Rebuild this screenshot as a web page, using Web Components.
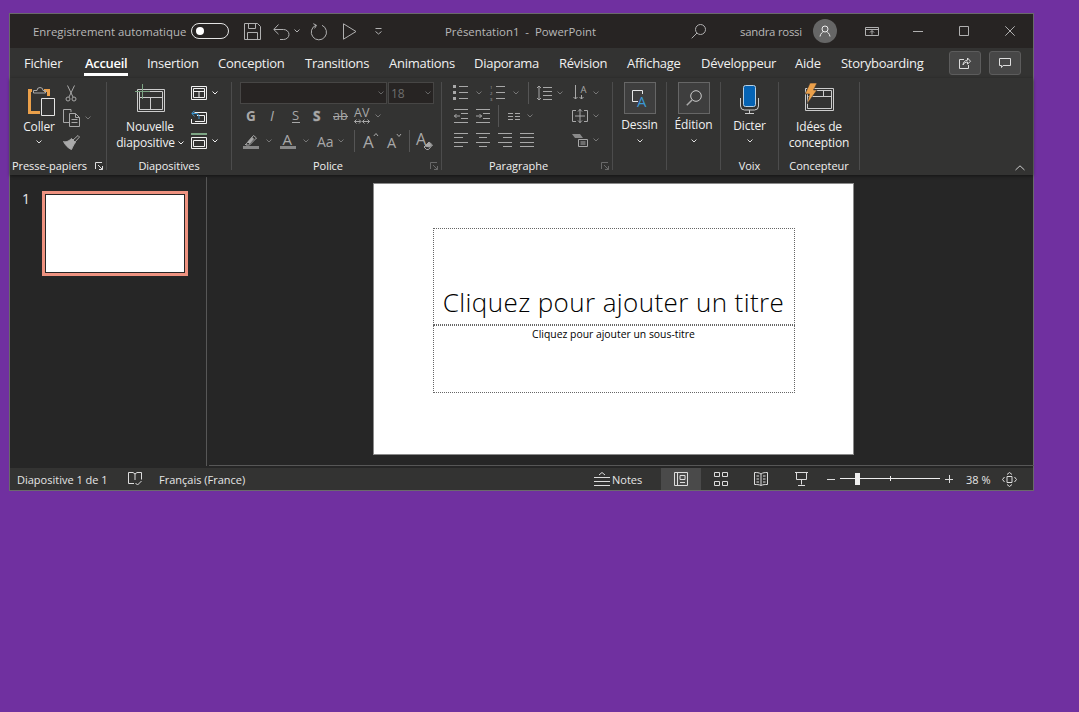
<!DOCTYPE html>
<html lang="fr">
<head>
<title>Présentation1 - PowerPoint</title>
<meta charset="utf-8">
<style>
    html, body { margin: 0; height: 100%; background: #7030a0; overflow: hidden; }
    body { font: 12px "Open Sans", "Noto Sans", sans-serif; color: #f0f0f0; }
    .dim { color: #a8a8a8; }
</style>
</head>
<body>
<pp-window>
    <pp-titlebar></pp-titlebar>
    <pp-tabs>
        <pp-tab style="width:61px">Fichier</pp-tab>
        <pp-tab active style="width:62px">Accueil</pp-tab>
        <pp-tab style="width:71px">Insertion</pp-tab>
        <pp-tab style="width:87px">Conception</pp-tab>
        <pp-tab style="width:84px">Transitions</pp-tab>
        <pp-tab style="width:85px">Animations</pp-tab>
        <pp-tab style="width:85px">Diaporama</pp-tab>
        <pp-tab style="width:68px">Révision</pp-tab>
        <pp-tab style="width:74px">Affichage</pp-tab>
        <pp-tab style="width:94px">Développeur</pp-tab>
        <pp-tab style="width:46px">Aide</pp-tab>
        <pp-tab style="width:108px">Storyboarding</pp-tab>
    </pp-tabs>
    <pp-ribbon>
        <pp-group label="Presse-papiers" w="97" launcher="on">
            <pp-row style="height:auto;align-items:flex-start">
                <pp-big style="width:48px;margin-left:5px;--top:4px;--gap:2px" chev>
                    <pp-icon n="paste" slot="icon" style="margin-left:5px"></pp-icon>Coller
                </pp-big>
                <pp-col>
                    <pp-icon n="scissors" class="dim" style="margin:3px 0 0 3px"></pp-icon>
                    <pp-row style="height:18px;margin-top:7px"><pp-icon n="copy" class="dim"></pp-icon><pp-icon n="chev" style="margin-left:5px;color:#777"></pp-icon></pp-row>
                    <pp-icon n="brush" class="dim" style="margin-top:8px"></pp-icon>
                </pp-col>
            </pp-row>
        </pp-group>
        <pp-group label="Diapositives" w="125">
            <pp-row style="height:auto;align-items:flex-start">
                <pp-big style="width:76px;margin-left:5px;--top:2px;--gap:8px">
                    <pp-icon n="newslide" slot="icon"></pp-icon>Nouvelle<br>diapositive <pp-icon n="chev" style="display:inline-block;vertical-align:2px"></pp-icon>
                </pp-big>
                <pp-col style="margin-left:3px">
                    <pp-row style="height:13px;margin-top:4px"><pp-icon n="layout"></pp-icon><pp-icon n="chev" style="margin-left:5px"></pp-icon></pp-row>
                    <pp-row style="height:14px;margin-top:11px"><pp-icon n="reset"></pp-icon></pp-row>
                    <pp-row style="height:16px;margin-top:9px"><pp-icon n="section"></pp-icon><pp-icon n="chev" style="margin-left:5px"></pp-icon></pp-row>
                </pp-col>
            </pp-row>
        </pp-group>
        <pp-group label="Police" w="210" launcher="dim">
            <pp-row style="height:22px;margin-left:8px">
                <pp-combo style="width:147px"></pp-combo>
                <pp-combo style="width:46px;margin-left:1px">18</pp-combo>
            </pp-row>
            <pp-row class="dim" style="height:18px;margin-top:3px">
                <pp-icon n="bold" style="margin-left:14px"></pp-icon>
                <pp-icon n="italic" style="margin-left:14px"></pp-icon>
                <pp-icon n="under" style="margin-left:16px"></pp-icon>
                <pp-icon n="shadow" style="margin-left:13px"></pp-icon>
                <pp-icon n="strike" style="margin-left:10px"></pp-icon>
                <pp-icon n="spacing" style="margin-left:6px"></pp-icon>
                <pp-icon n="chev" style="margin-left:5px;color:#777"></pp-icon>
            </pp-row>
            <pp-row class="dim" style="height:19px;margin-top:6px">
                <pp-icon n="pen" style="margin-left:11px"></pp-icon>
                <pp-icon n="chev" style="margin-left:7px;color:#777"></pp-icon>
                <pp-icon n="color" style="margin-left:8px"></pp-icon>
                <pp-icon n="chev" style="margin-left:7px;color:#777"></pp-icon>
                <pp-icon n="case" style="margin-left:8px"></pp-icon>
                <pp-icon n="chev" style="margin-left:4px;color:#777"></pp-icon>
                <pp-icon n="sep" style="margin-left:10px"></pp-icon>
                <pp-icon n="grow" style="margin-left:8px"></pp-icon>
                <pp-icon n="shrink" style="margin-left:9px"></pp-icon>
                <pp-icon n="sep" style="margin-left:8px"></pp-icon>
                <pp-icon n="clear" style="margin-left:6px"></pp-icon>
            </pp-row>
        </pp-group>
        <pp-group label="Paragraphe" w="171" launcher="dim">
            <pp-row class="dim" style="height:15px;margin-top:3px">
                <pp-icon n="bullets" style="margin-left:11px"></pp-icon>
                <pp-icon n="chev" style="margin-left:8px;color:#777"></pp-icon>
                <pp-icon n="numbers" style="margin-left:8px"></pp-icon>
                <pp-icon n="chev" style="margin-left:8px;color:#777"></pp-icon>
                <pp-icon n="sep" style="margin-left:9px"></pp-icon>
                <pp-icon n="linespace" style="margin-left:7px"></pp-icon>
                <pp-icon n="chev" style="margin-left:5px;color:#777"></pp-icon>
                <pp-icon n="textdir" style="margin-left:10px"></pp-icon>
                <pp-icon n="chev" style="margin-left:5px;color:#777"></pp-icon>
            </pp-row>
            <pp-row class="dim" style="height:14px;margin-top:9px">
                <pp-icon n="outdent" style="margin-left:12px"></pp-icon>
                <pp-icon n="indent" style="margin-left:8px"></pp-icon>
                <pp-icon n="sep" style="margin-left:8px"></pp-icon>
                <pp-icon n="columns" style="margin-left:9px"></pp-icon>
                <pp-icon n="chev" style="margin-left:7px;color:#777"></pp-icon>
                <pp-icon n="alignbox" style="margin-left:39px"></pp-icon>
                <pp-icon n="chev" style="margin-left:5px;color:#777"></pp-icon>
            </pp-row>
            <pp-row class="dim" style="height:14px;margin-top:10px">
                <pp-icon n="left" style="margin-left:12px"></pp-icon>
                <pp-icon n="center" style="margin-left:8px"></pp-icon>
                <pp-icon n="right" style="margin-left:8px"></pp-icon>
                <pp-icon n="justify" style="margin-left:8px"></pp-icon>
                <pp-icon n="smartart" style="margin-left:38px"></pp-icon>
                <pp-icon n="chev" style="margin-left:5px;color:#777"></pp-icon>
            </pp-row>
        </pp-group>
        <pp-group w="54">
            <pp-big boxed chev style="--gap:3px;--chev:6px"><pp-icon n="draw" slot="icon"></pp-icon>Dessin</pp-big>
        </pp-group>
        <pp-group w="54">
            <pp-big boxed chev style="--gap:3px;--chev:6px"><pp-icon n="find" slot="icon"></pp-icon>Édition</pp-big>
        </pp-group>
        <pp-group label="Voix" w="58">
            <pp-big chev style="--top:3px;--gap:4px"><pp-icon n="mic" slot="icon"></pp-icon>Dicter</pp-big>
        </pp-group>
        <pp-group label="Concepteur" w="81">
            <pp-big style="--top:1px;--gap:8px"><pp-icon n="ideas" slot="icon"></pp-icon>Idées de<br>conception</pp-big>
        </pp-group>
        <pp-icon n="collapse" style="margin:auto 8px 5px auto;color:#ccc"></pp-icon>
    </pp-ribbon>
    <pp-main>
        <pp-thumbs></pp-thumbs>
        <pp-editor>
            <pp-slide></pp-slide>
        </pp-editor>
    </pp-main>
    <pp-status></pp-status>
</pp-window>

<script>
    // every icon: [width, height, svg content], drawn 1:1 in pixels
    const ICONS = {
        chev: [6, 4, '<path d="M.5.5 3 3 5.5.5"/>'],
        collapse: [10, 5, '<path d="M.5 5 5 .8 9.500 5"/>'],
        sep: [1, 22, '<path d="M.5 0v22" stroke="#555"/>'],
        save: [17, 17, '<path d="M.5.5h13l3 3v13H.5zM4.500.5v5h7v-5M3.500 16.500v-7h10v7"/>'],
        undo: [17, 17, '<path d="M1 6.500h9.500a5.500 5 0 0 1 0 10H7M5.500 1.500.8 6.500l4.700 4.700"/>'],
        redo: [17, 17, '<path d="M5 2.200a7.600 7.600 0 1 0 6 .1"/><path d="M2.300.7 5.500 2.300 3.600 5.400"/>'],
        play: [14, 17, '<path d="M.5.8 13 8.500.5 16.200z"/>'],
        qat: [7, 7, '<path d="M.5.5h6M.5 3.500 3.500 6 6.500 3.500"/>'],
        search: [15, 15, '<circle cx="9.500" cy="5.500" r="5"/><path d="M6 9 .7 14.300"/>'],
        display: [14, 9, '<path d="M.5.5h13v8H.5zM.5 2.500h13M7 7.500V3.800M5 5.500l2-2 2 2"/>'],
        min: [10, 1, '<path d="M0 .5h10"/>'],
        max: [10, 10, '<path d="M.5.5h9v9h-9z"/>'],
        close: [10, 10, '<path d="m.3.300 9.400 9.400M9.700.300.300 9.700"/>'],
        user: [12, 12, '<circle cx="6" cy="4" r="3"/><path d="M1 11.500c.5-3 2.500-4.500 3.500-4.800M11 11.500c-.5-3-2.500-4.500-3.500-4.800"/>'],
        share: [12, 12, '<path d="M5 2.500H.5v9h9V8M4 8c.3-3 2-4.700 4.500-4.800V1l3 3.200-3 3V5C6.500 5 5 6 4 8z"/>'],
        comment: [12, 10, '<path d="M.5.500h11v7H4L2.500 9.500v-2h-2z"/>'],
        launch: [8, 8, '<path d="M.5 7V.5H7M3 3l4.500 4.500M7.500 4v3.500H4"/>'],
        paste: [28, 31, '<path d="M4 4.500H1.500v22H12" stroke="#eba04a" stroke-width="3"/><path d="M16 4.500h4.500V10" stroke="#eba04a" stroke-width="3"/><path d="M5.500 7V4.500H9a3 3 0 0 1 6 0h2.500V7z" stroke="#aaa"/><path fill="#333" stroke="#e4e4e4" d="M13.500 12.500h13v17h-13z"/>'],
        scissors: [10, 17, '<circle cx="2" cy="14" r="2"/><circle cx="8" cy="14" r="2"/><path d="M3 12 8.500.5M7 12 1.500.5"/>'],
        copy: [17, 18, '<path d="M8 3V.5H.5v13H6"/><path d="M6.500 4.500h6l4 4v9h-10zM8.500 10.500h6M8.500 13.500h6M12.500 4.500v4h4"/>'],
        brush: [17, 15, '<path d="M.5 6.500c3 1 6-1 8-3l4 4c-2 2-3 5-4 7-3-1-6-4-8-8z" fill="#aaa"/><path d="m10 5 5-4.500 1.500 1.500-4.500 5"/>'],
        newslide: [30, 27, '<path d="M2.500 5.500h27v22h-27zM4.500 7.500h23v18h-23zM4.500 13.500h23M15.500 13.500v12"/><path d="M0 7.500h15M7.500 0v15" stroke="#7da584"/>'],
        layout: [16, 14, '<path d="M.5.500h15v13H.5zM2.500 2.500h11v9h-11zM2.500 5.500h11M8 5.500v6"/>'],
        reset: [16, 14, '<path d="M3.500 2.500h12v11H.5V9M6 5.500h7.500v6H4"/><path stroke="#3b97d3" d="M1 3.500h4a3 3 0 0 1 3 3V9M3.500.8.800 3.500l2.700 2.700"/>'],
        section: [16, 16, '<path d="M.5 4.500h15v11H.5zM2.500 7.500h11v6h-11z"/><path stroke="#7da584" stroke-width="2" d="M0 1h16"/>'],
        bold: [10, 18, '<text x="0" y="14" font-size="13.500" font-weight="700">G</text>'],
        italic: [6, 18, '<text x="0" y="14" font-size="14.500" font-style="italic">I</text>'],
        under: [8, 18, '<text x="0" y="13" font-size="13">S</text><path d="M0 15.500h8"/>'],
        shadow: [10, 18, '<path d="M0 0"/><text x="0" y="14" font-size="13.500" font-weight="700" style="paint-order:stroke;stroke:#666;stroke-width:1px">S</text>'],
        strike: [15, 18, '<text x="0" y="13" font-size="12.500">ab</text><path d="M0 9.500h15"/>'],
        spacing: [16, 18, '<text x="0" y="10" font-size="12.500">AV</text><path d="M.5 14.500h6M8.500 14.500h7M2.500 12.500l-2 2 2 2M5 12.500l2 2-2 2M10.500 12.500l-2 2 2 2M13.500 12.500l2 2-2 2"/>'],
        pen: [16, 16, '<rect y="13" width="16" height="3" fill="#888" stroke="none"/><path d="M3.500 10.500 10.500 2.500l3 2.500-7 7H3zM3.500 10.500 2 12"/><path fill="#aaa" d="M5 9l4-4.500 1.500 1.500-4 4.500z"/>'],
        color: [16, 17, '<rect y="14" width="16" height="3" fill="#888" stroke="none"/><text x="2.500" y="12.500" font-size="15">A</text>'],
        case: [17, 14, '<text x="0" y="13" font-size="14">Aa</text>'],
        grow: [15, 18, '<text x="0" y="16" font-size="17">A</text><path d="M10.800 4 13 1.500 15 4"/>'],
        shrink: [14, 18, '<text x="0" y="16" font-size="14.500">A</text><path d="M9.800 2 12 4.500 14 2"/>'],
        clear: [17, 18, '<text x="0" y="13" font-size="16">A</text><path d="m8 15 5-5 3.500 3-4 4.500h-2z" fill="#333"/><path d="m9 14 3.500-3.500 3 2.500-2 2z" fill="#aaa"/>'],
        bullets: [15, 15, '<path fill="currentColor" stroke="none" d="M0 0h3v3H0zM0 6h3v3H0zM0 12h3v3H0z"/><path d="M6 1.500h9M6 7.500h9M6 13.500h9"/>'],
        numbers: [15, 15, '<text x="0" y="4" font-size="4.300">1</text><text x="0" y="10" font-size="4.300">2</text><text x="0" y="16" font-size="4.300">3</text><path d="M6 1.500h9M6 7.500h9M6 13.500h9"/>'],
        linespace: [16, 16, '<path d="M7 2.500h9M7 6.500h9M7 10.500h9M7 14.500h9M3 1v14M1 3l2-2 2 2M1 13l2 2 2-2"/>'],
        textdir: [15, 17, '<text x="7.500" y="9" font-size="9.500">A</text><path d="M2.500 1v14M.5 13l2 2 2-2M8.500 11v4M6.500 13l2 2 2-2"/>'],
        outdent: [14, 14, '<path d="M0 .5h14M7 4.500h7M7 9.500h7M0 13.500h14M0 7h6M2.500 5 .5 7l2 2"/>'],
        indent: [14, 14, '<path d="M0 .5h14M7 4.500h7M7 9.500h7M0 13.500h14M0 7h6M3.500 5l2 2-2 2"/>'],
        columns: [12, 7, '<path d="M0 .5h5M0 3.500h5M0 6.500h5M7 .5h5M7 3.500h5M7 6.500h5"/>'],
        alignbox: [16, 14, '<path d="M4 1.500H.5v11H4M12 1.500h3.500v11H12M8 0v14M6 2.500 8 .5l2 2M6 11.500l2 2 2-2M3 7h10"/>'],
        left: [14, 14, '<path d="M0 .5h14M0 4.500h9M0 9.500h14M0 13.500h9"/>'],
        center: [14, 14, '<path d="M0 .5h14M3 4.500h8M0 9.500h14M3 13.500h8"/>'],
        right: [14, 14, '<path d="M0 .5h14M5 4.500h9M0 9.500h14M5 13.500h9"/>'],
        justify: [14, 14, '<path d="M0 .5h14M0 4.500h14M0 9.500h14M0 13.500h14"/>'],
        smartart: [16, 13, '<path fill="#8a8a8a" stroke="none" d="M0 0h8l3 4H3z"/><path fill="#333" d="M6.500 5.500h9v7h-9z"/><path d="M8.500 8h5M8.500 10h5"/>'],
        draw: [16, 17, '<path d="M6 11.500H.5V.500h10V4" stroke="#e8e8e8"/><text x="5" y="16.500" font-size="15" style="fill:#3b97d3">A</text>'],
        find: [16, 16, '<circle cx="10" cy="6" r="5.300" stroke="#ccc"/><path d="M6 10 .8 15.300" stroke="#aaa" stroke-width="1.500"/>'],
        mic: [19, 29, '<rect x="3.500" y=".5" width="12" height="21" rx="2" fill="#0563b4" stroke="#b8d0e4"/><path d="M.5 13v8a4 4 0 0 0 4 4h10a4 4 0 0 0 4-4v-8M9.500 25v3.500M5 28.500h9" stroke="#ccc"/>'],
        ideas: [31, 28, '<path d="M1.500 5.500h28v22h-28zM3.500 7.500h24v18h-24zM3.500 13.500h24M19.500 7.500v6" stroke="#ccc"/><path fill="#eba04a" stroke="#333" stroke-width=".6" d="M6 0h7L9.500 7H13L3 21 5.500 11H1z"/>'],
        book: [14, 14, '<path d="M.5.500H5L7 2 9 .500h4.500v7M7 2v6M.5.500v11H6M7.500 11l2 2 4-4"/>'],
        notes: [16, 14, '<path d="M5 3 8 .5l3 2.500M0 5.500h16M0 9.500h16M0 13.500h16"/>'],
        normal: [14, 14, '<path d="M.5.500h13v13H.5zM3.500.500v13M6 3.500h5v4H6zM6 10.500h5"/>'],
        sorter: [14, 14, '<path d="M.5.500h5v4h-5zM8.500.500h5v4h-5zM.5 9.500h5v4h-5zM8.500 9.500h5v4h-5z"/>'],
        reader: [14, 14, '<path d="M7 2C5 .5 3 .5.500.500v12c2.500 0 4.500 0 6.500 1 2-1 4-1 6.500-1V.500C11 .5 9 .5 7 2zM7 2v11M2.500 4h2.500M2.500 7h2.500M2.500 10h2.500M9 4h2.500M9 7h2.500M9 10h2.500"/>'],
        show: [13, 14, '<path d="M0 .5h13M1.500 .5v7h10v-7M6.500 7.500v5M3 13.500h7"/>'],
        minus: [8, 1, '<path d="M0 .5h8"/>'],
        plus: [8, 8, '<path d="M0 4.500h8M4.500 0v8"/>'],
        fit: [15, 15, '<path d="M5 4.500h5v6H5zM5 2.500 7.500.500l2.500 2M5 12.500l2.500 2 2.500-2M2.500 5 .5 7.500l2 2.500M12.500 5l2 2.500-2 2.500"/>'],
    };

    function el(name, css, html) {
        customElements.define(name, class extends HTMLElement {
            connectedCallback() {
                if (this.shadowRoot) return;
                const body = typeof html === 'function' ? html(this) : html;
                this.attachShadow({ mode: 'open' }).innerHTML = `<style>${typeof css === 'function' ? css(this) : css}</style>${body}`;
            }
        });
    }

    el('pp-icon', `
        :host { display: block; flex: none; line-height: 0; color: inherit; }
        svg { display: block; fill: none; stroke: currentColor; overflow: visible; }
        text { fill: currentColor; stroke: none; font-family: "Open Sans", "Noto Sans", sans-serif; }
    `, (me) => {
        const [w, h, inner] = ICONS[me.getAttribute('n')];
        return `<svg width="${w}" height="${h}" viewBox="0 0 ${w} ${h}">${inner}</svg>`;
    });

    el('pp-row', `:host { display: flex; align-items: center; }`, `<slot></slot>`);
    el('pp-col', `:host { display: flex; flex-direction: column; align-items: flex-start; }`, `<slot></slot>`);

    el('pp-window', `
        :host {
            display: flex; flex-direction: column; box-sizing: border-box;
            width: 1025px; height: 478px; margin: 13px 0 0 9px;
            border: 1px solid #6a6a6a; background: #262626;
        }
    `, `<slot></slot>`);

    el('pp-titlebar', `
        :host { display: flex; align-items: center; flex: none; height: 34px; background: #272423; color: #b8b8b8; font-size: 11.400px; white-space: nowrap; }
        span { min-width: 0; flex: none; }
        .toggle { flex: none; width: 38px; height: 16px; box-sizing: border-box; margin-left: 6px; border: 1.500px solid #e4e4e4; border-radius: 8px; display: flex; align-items: center; padding-left: 4px; }
        .toggle i { width: 8px; height: 8px; border-radius: 50%; background: #fff; }
        .avatar { flex: none; width: 24px; height: 24px; border-radius: 50%; background: #666; margin-left: 11px; display: flex; align-items: center; justify-content: center; }
        pp-icon { color: #b0b0b0; }
    `, `
        <span style="margin-left:23px;width:152px">Enregistrement automatique</span>
        <div class="toggle"><i></i></div>
        <pp-icon n="save" style="margin-left:15px"></pp-icon>
        <pp-icon n="undo" style="margin-left:12px"></pp-icon>
        <pp-icon n="chev" style="margin-left:4px"></pp-icon>
        <pp-icon n="redo" style="margin-left:11px"></pp-icon>
        <pp-icon n="play" style="margin-left:15px"></pp-icon>
        <pp-icon n="qat" style="margin-left:18px"></pp-icon>
        <span style="margin-left:63px;width:246px">Présentation1&nbsp; -&nbsp; PowerPoint</span>
        <pp-icon n="search"></pp-icon>
        <span style="margin-left:34px;width:62px;letter-spacing:-.25px">sandra rossi</span>
        <div class="avatar"><pp-icon n="user" style="color:#eee"></pp-icon></div>
        <pp-icon n="display" style="margin-left:28px"></pp-icon>
        <pp-icon n="min" style="margin-left:34px"></pp-icon>
        <pp-icon n="max" style="margin-left:36px"></pp-icon>
        <pp-icon n="close" style="margin-left:36px"></pp-icon>
    `);

    el('pp-tabs', `
        :host { display: flex; flex: none; height: 30px; padding-left: 14px; background: #333332; font-size: 13px; letter-spacing: -.27px; }
        .btn { flex: none; box-sizing: border-box; width: 32px; height: 24px; margin-top: 3px; background: #474747; border: 1px solid #5c5c5c; border-radius: 3px; display: flex; align-items: center; justify-content: center; color: #ddd; }
    `, `
        <slot></slot>
        <div class="btn"><pp-icon n="share"></pp-icon></div>
        <div class="btn" style="margin-left:8px"><pp-icon n="comment"></pp-icon></div>
    `);

    el('pp-tab', `
        :host { display: block; flex: none; white-space: nowrap; color: #f0f0f0; }
        span { display: inline-block; height: 25px; line-height: 30px; }
        :host([active]) span { border-bottom: 3px solid #fff; font-weight: 600; color: #fff; margin-left: -1px; padding: 0 1px; letter-spacing: -.3px; }
    `, `<span><slot></slot></span>`);

    el('pp-ribbon', `
        :host {
            display: flex; flex: none; height: 93px; padding-top: 4px; background: #333332;
            position: relative; z-index: 1; box-shadow: 0 1px 3px rgba(0, 0, 0, .5);
        }
    `, `<slot></slot>`);

    el('pp-group', (me) => `
        :host {
            display: flex; flex-direction: column; flex: none; box-sizing: border-box;
            width: ${me.getAttribute('w')}px; height: 88px; border-right: 1px solid #4c4c4c;
        }
        .body { flex: 1; min-height: 0; }
        .foot { display: flex; flex: none; height: 12px; line-height: 16px; font-size: 11px; letter-spacing: -.05px; }
        .name { flex: 1; text-align: center; white-space: nowrap; padding-right: ${me.hasAttribute('launcher') ? 6 : 0}px; }
        pp-icon { margin: 4px 3px 0 0; color: ${me.getAttribute('launcher') === 'dim' ? '#6a6a6a' : '#ddd'}; }
    `, (me) => `
        <div class="body"><slot></slot></div>
        <div class="foot">
            <span class="name">${me.getAttribute('label') || ''}</span>
            ${me.hasAttribute('launcher') ? '<pp-icon n="launch"></pp-icon>' : ''}
        </div>
    `);

    el('pp-big', `
        :host { display: flex; flex-direction: column; align-items: center; flex: none; font-size: 12px; line-height: 16px; letter-spacing: -.15px; color: #f0f0f0; text-align: center; white-space: nowrap; }
        .icon { margin-top: var(--top, 0); color: #ccc; }
        :host([boxed]) .icon { box-sizing: border-box; width: 32px; height: 32px; border: 1px solid #666; background: #3e3e3e; display: flex; align-items: center; justify-content: center; }
        .text { margin-top: var(--gap, 2px); }
        pp-icon { margin-top: var(--chev, 5px); color: #ddd; }
    `, (me) => `
        <div class="icon"><slot name="icon"></slot></div>
        <div class="text"><slot></slot></div>
        ${me.hasAttribute('chev') ? '<pp-icon n="chev"></pp-icon>' : ''}
    `);

    el('pp-combo', `
        :host { display: flex; align-items: center; flex: none; box-sizing: border-box; height: 22px; padding: 0 2px; background: #272423; border: 1px solid #474645; color: #6e6e6e; font-size: 12px; }
        span { flex: 1; }
    `, `<span><slot></slot></span><pp-icon n="chev" style="color:#666"></pp-icon>`);

    el('pp-main', `:host { display: flex; flex: 1; min-height: 0; }`, `<slot></slot>`);

    el('pp-thumbs', `
        :host { display: flex; flex: none; box-sizing: border-box; width: 197px; height: 289px; margin-top: 2px; padding: 14px 0 0 12px; border-right: 1px solid #575757; }
        .num { width: 20px; font-size: 14px; line-height: 16px; color: #e8e8e8; }
        .thumb { box-sizing: border-box; width: 146px; height: 85px; border: 3px solid #ee9280; background: #fff; box-shadow: inset 0 0 0 1px #262626; }
    `, `<div class="num">1</div><div class="thumb"></div>`);

    el('pp-editor', `
        :host { display: flex; justify-content: center; flex: none; box-sizing: border-box; width: 825px; height: 291px; margin-left: 2px; padding: 8px 17px 0 0; border-bottom: 1px solid #575757; }
    `, `<slot></slot>`);

    el('pp-slide', `
        :host { display: flex; flex-direction: column; align-items: center; flex: none; box-sizing: border-box; width: 481px; height: 272px; padding: 44px 0 0 1px; background: #fff; border: 1px solid #8a8a8a; color: #000; }
        .title, .sub { box-sizing: border-box; width: 362px; border: 1px dotted #666; text-align: center; white-space: nowrap; }
        .title { display: flex; align-items: flex-end; justify-content: center; height: 97px; font-size: 26px; font-weight: 300; letter-spacing: .4px; line-height: 36px; padding-bottom: 4px; }
        .sub { height: 68px; font-size: 10.400px; line-height: 17px; }
    `, `<div class="title">Cliquez pour ajouter un titre</div><div class="sub">Cliquez pour ajouter un sous-titre</div>`);

    el('pp-zoombar', `
        :host { display: block; flex: none; position: relative; width: 100px; height: 12px; margin-left: 5px; }
        .line { position: absolute; left: 0; right: 0; top: 5px; height: 1px; background: #eee; }
        .tick { position: absolute; left: 50px; top: 3px; width: 1px; height: 5px; background: #eee; }
        .thumb { position: absolute; left: 15px; top: 0; width: 5px; height: 12px; background: #eee; }
    `, `<div class="line"></div><div class="tick"></div><div class="thumb"></div>`);

    el('pp-status', `
        :host { display: flex; align-items: center; flex: none; height: 22px; background: #333332; color: #e6e6e6; font-size: 11px; white-space: nowrap; }
        span { flex: none; }
        .view { flex: none; width: 40px; height: 22px; display: flex; align-items: center; justify-content: center; color: #ddd; }
        .on { background: #4a4a4a; }
        pp-icon { color: #ddd; }
    `, `
        <span style="margin-left:7px;width:111px">Diapositive 1 de 1</span>
        <pp-icon n="book"></pp-icon>
        <span style="margin-left:17px;width:85px">Français (France)</span>
        <pp-icon n="notes" style="margin-left:auto"></pp-icon>
        <span style="margin-left:2px;width:30px">Notes</span>
        <div class="view on" style="margin-left:19px"><pp-icon n="normal"></pp-icon></div>
        <div class="view"><pp-icon n="sorter"></pp-icon></div>
        <div class="view"><pp-icon n="reader"></pp-icon></div>
        <div class="view"><pp-icon n="show"></pp-icon></div>
        <pp-icon n="minus" style="margin-left:6px"></pp-icon>
        <pp-zoombar></pp-zoombar>
        <pp-icon n="plus" style="margin-left:5px"></pp-icon>
        <span style="margin-left:13px;width:24px">38 %</span>
        <pp-icon n="fit" style="margin:0 16px 0 12px"></pp-icon>
    `);
</script>
</body>
</html>
